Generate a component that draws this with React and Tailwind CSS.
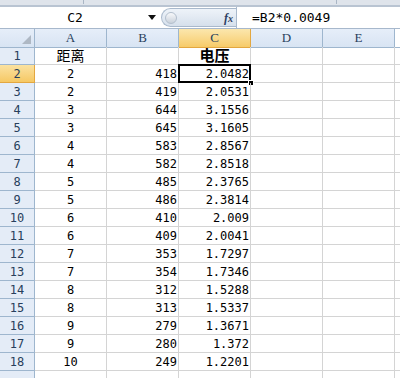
import React from 'react';

const rows = [
  ['距离', '', '电压'],
  ['2', '418', '2.0482'],
  ['2', '419', '2.0531'],
  ['3', '644', '3.1556'],
  ['3', '645', '3.1605'],
  ['4', '583', '2.8567'],
  ['4', '582', '2.8518'],
  ['5', '485', '2.3765'],
  ['5', '486', '2.3814'],
  ['6', '410', '2.009'],
  ['6', '409', '2.0041'],
  ['7', '353', '1.7297'],
  ['7', '354', '1.7346'],
  ['8', '312', '1.5288'],
  ['8', '313', '1.5337'],
  ['9', '279', '1.3671'],
  ['9', '280', '1.372'],
  ['10', '249', '1.2201'],
  ['', '', ''],
];

const mono = { fontFamily: '"DejaVu Sans Mono", monospace' };
const cjk = { fontFamily: '"Noto Sans CJK SC", sans-serif' };

// column header cell
function ColHead({ label, active }) {
  return (
    <div
      className={
        active
          ? 'h-[19px] flex items-center justify-center border-r border-b border-r-[#e3a740] border-b-[#e3a740] bg-gradient-to-b from-[#fbe7ad] to-[#f7cb68] text-[#283f5c] text-[13px]'
          : 'h-[19px] flex items-center justify-center border-r border-b border-[#9eb6ce] bg-gradient-to-b from-[#e6eef9] to-[#d8e4f3] text-[#283f5c] text-[13px]'
      }
      style={{ fontFamily: '"Liberation Serif", serif' }}
    >
      {label}
    </div>
  );
}

export default function App() {
  return (
    <div className="w-[400px] h-[378px] overflow-hidden bg-white select-none">
      {/* ribbon leftover */}
      <div className="relative h-[7px] bg-[#dfe4eb] border-b-2 border-[#b9c4d2]">
        <div className="absolute left-[83px] top-0 h-[4px] w-px bg-[#aab6c5]" />
        <div className="absolute left-[336px] top-0 h-[4px] w-px bg-[#aab6c5]" />
      </div>

      {/* formula bar */}
      <div className="flex h-[22px] border-b border-[#a7b8cc] bg-white">
        <div className="w-[161px] flex items-center">
          <div className="flex-1 text-center text-[13px] text-black pl-[2px]" style={mono}>
            C2
          </div>
          <svg width="8" height="5" viewBox="0 0 8 5" className="mr-[5px]">
            <path d="M0 0h8L4 5z" fill="#111" />
          </svg>
        </div>
        <div className="w-[75px] my-[1px] flex items-center rounded-l-full border border-r-0 border-[#a9b9cc] bg-gradient-to-b from-[#eef3f9] to-[#d6e0ec]">
          <div className="ml-[3px] w-[12px] h-[12px] rounded-full border border-[#b3bfcd] bg-gradient-to-b from-[#f8f9fb] to-[#c9d1db]" />
          <div className="flex-1" />
          <span
            className="mr-[3px] text-[12px] font-bold italic text-[#2c3f63]"
            style={{ fontFamily: '"Liberation Serif", serif' }}
          >
            f<span className="text-[10px]">x</span>
          </span>
        </div>
        <div className="flex-1 flex items-center border-l border-[#a9b9cc] pl-[15px] text-[13px] text-black" style={mono}>
          =B2*0.0049
        </div>
      </div>

      {/* sheet */}
      <div className="grid grid-cols-[35px_72px_72px_72px_72px_72px_1fr] auto-rows-[18px]">
        <div className="relative h-[19px] border-r border-b border-[#9eb6ce] bg-gradient-to-b from-[#e6eef9] to-[#d8e4f3]">
          <svg width="9" height="9" viewBox="0 0 9 9" className="absolute right-[3px] bottom-[3px]">
            <path d="M9 0V9H0z" fill="#aeb8c4" />
          </svg>
        </div>
        <ColHead label="A" />
        <ColHead label="B" />
        <ColHead label="C" active />
        <ColHead label="D" />
        <ColHead label="E" />
        <div className="h-[19px] border-b border-[#9eb6ce]" />

        {rows.map((r, i) => {
          const n = i + 1;
          const sel = n === 2;
          return (
            <React.Fragment key={n}>
              <div
                className={
                  sel
                    ? 'flex items-center justify-center border-r border-b border-r-[#e3a740] border-b-[#e3a740] bg-gradient-to-b from-[#fbe2a0] to-[#f6c863] text-[12px] text-[#283f5c]'
                    : 'flex items-center justify-center border-r border-b border-[#9eb6ce] bg-[#e4ecf7] text-[12px] text-[#283f5c]'
                }
                style={mono}
              >
                {n < 19 ? n : ''}
              </div>
              <div
                className={
                  n === 1
                    ? 'flex items-center justify-center border-r border-b border-[#d4d4d4] text-[14px] text-black'
                    : 'flex items-center justify-center border-r border-b border-[#d4d4d4] text-[12px] text-black'
                }
                style={n === 1 ? cjk : mono}
              >
                {r[0]}
              </div>
              <div className="flex items-center justify-end pr-[1px] border-r border-b border-[#d4d4d4] text-[12px] text-black" style={mono}>
                {r[1]}
              </div>
              <div
                className={
                  n === 1
                    ? 'relative flex items-center justify-center border-r border-b border-[#d4d4d4] text-[15px] font-bold text-black'
                    : 'relative flex items-center justify-end pr-[1px] border-r border-b border-[#d4d4d4] text-[12px] text-black'
                }
                style={n === 1 ? cjk : mono}
              >
                {r[2]}
                {sel && (
                  <>
                    <div className="absolute -left-px -top-px -right-px -bottom-px border-2 border-black" />
                    <div className="absolute -right-[4px] -bottom-[4px] w-[6px] h-[6px] bg-black border border-white" />
                  </>
                )}
              </div>
              <div className="border-r border-b border-[#d4d4d4]" />
              <div className="border-r border-b border-[#d4d4d4]" />
              <div className="border-b border-[#d4d4d4]" />
            </React.Fragment>
          );
        })}
      </div>
    </div>
  );
}
